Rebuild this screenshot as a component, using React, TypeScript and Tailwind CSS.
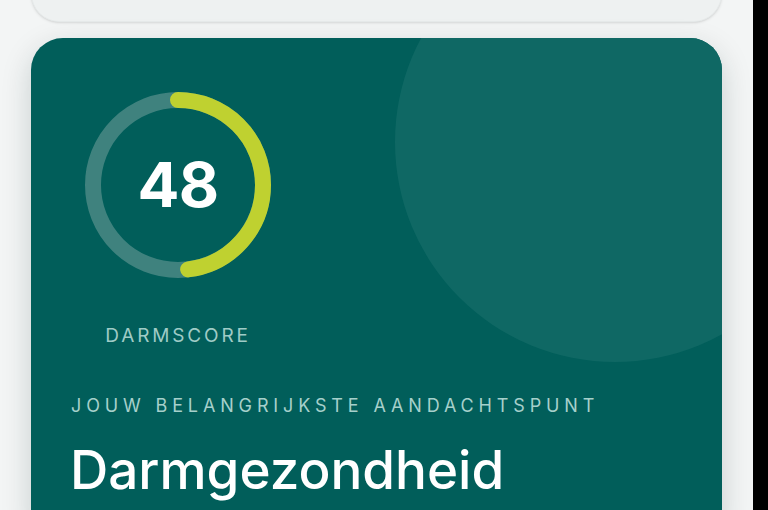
import React from "react";

function ScoreRing({ score }: { score: number }) {
  const size = 186;
  const stroke = 16;
  const r = (size - stroke) / 2;
  const c = 2 * Math.PI * r;
  const dash = (score / 100) * c;
  return (
    <div className="relative h-[186px] w-[186px]">
      <svg width={size} height={size} viewBox={`0 0 ${size} ${size}`} className="-rotate-90">
        <circle cx={size / 2} cy={size / 2} r={r} fill="none" stroke="#3f827e" strokeWidth={stroke} />
        <circle
          cx={size / 2}
          cy={size / 2}
          r={r}
          fill="none"
          stroke="#bfd130"
          strokeWidth={stroke}
          strokeLinecap="round"
          strokeDasharray={`${dash} ${c}`}
        />
      </svg>
      <div className="absolute inset-0 flex items-center justify-center">
        <span className="text-[62px] font-bold leading-none text-white tracking-[-0.01em]">{score}</span>
      </div>
    </div>
  );
}

export default function App() {
  return (
    <div
      className="flex h-[510px] w-[768px] overflow-hidden"
      style={{ fontFamily: "Inter, 'Noto Sans', sans-serif" }}
    >
      <div className="flex w-[753px] flex-col gap-4 bg-[#f3f5f5] px-[31px]">
        <div className="-mt-[78px] h-[100px] shrink-0 rounded-[28px] border border-[#e6eaea] bg-[#eef1f1] shadow-sm" />
        <div className="relative shrink-0 overflow-hidden rounded-[32px] bg-[#015e5a] px-10 pt-[54px] pb-10 shadow-[0_10px_30px_rgba(0,40,38,0.18)]">
          <div className="absolute -right-[113px] -top-[116px] h-[440px] w-[440px] rounded-full bg-[#0f6864]" />
          <div className="relative flex flex-col">
            <div className="ml-[14px] flex w-[186px] flex-col items-center">
              <ScoreRing score={48} />
              <div className="mt-[47px] text-[19px] font-normal leading-[22px] tracking-[0.15em] text-[#9fcbc6]">
                DARMSCORE
              </div>
            </div>
            <div className="mt-[48px] text-[18px] font-normal leading-[22px] tracking-[0.27em] text-[#a6d0cb]">
              JOUW BELANGRIJKSTE AANDACHTSPUNT
            </div>
            <div className="mt-[22px] -ml-[1px] text-[53px] font-medium leading-[62px] text-white">
              Darmgezondheid
            </div>
          </div>
        </div>
      </div>
      <div className="flex-1 bg-black" />
    </div>
  );
}
